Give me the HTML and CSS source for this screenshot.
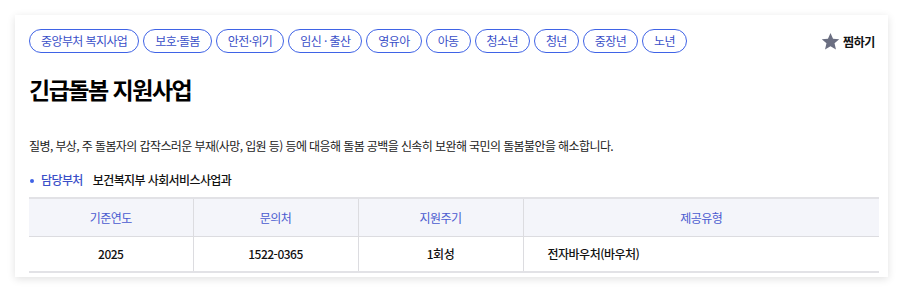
FILE: index.html
```html
<!DOCTYPE html>
<html lang="ko">
<head>
<meta charset="utf-8">
<link rel="stylesheet" href="styles.css">
</head>
<body>
<div class="card">
  <div class="top">
    <ul class="tags">
      <li class="tag">중앙부처 복지사업</li>
      <li class="tag">보호·돌봄</li>
      <li class="tag">안전·위기</li>
      <li class="tag">임신 · 출산</li>
      <li class="tag">영유아</li>
      <li class="tag">아동</li>
      <li class="tag">청소년</li>
      <li class="tag">청년</li>
      <li class="tag">중장년</li>
      <li class="tag">노년</li>
    </ul>
    <button class="fav">
      <svg class="star" width="19" height="19" viewBox="0 0 24 24"><path d="M12 1.2l3.2 7.2 7.8.7-5.9 5.2 1.8 7.7L12 18l-6.9 4 1.8-7.7-5.9-5.2 7.8-.7z" fill="#6b6f82"/></svg>
      <span>찜하기</span>
    </button>
  </div>
  <h1 class="title">긴급돌봄 지원사업</h1>
  <p class="desc">질병, 부상, 주 돌봄자의 갑작스러운 부재(사망, 입원 등) 등에 대응해 돌봄 공백을 신속히 보완해 국민의 돌봄불안을 해소합니다.</p>
  <div class="dept"><span class="dept-label">담당부처</span><span class="dept-name">보건복지부 사회서비스사업과</span></div>
  <table class="info">
    <thead>
      <tr><th class="c1">기준연도</th><th class="c2">문의처</th><th class="c3">지원주기</th><th class="c4">제공유형</th></tr>
    </thead>
    <tbody>
      <tr><td>2025</td><td>1522-0365</td><td>1회성</td><td class="left">전자바우처(바우처)</td></tr>
    </tbody>
  </table>
</div>
</body>
</html>
```
FILE: styles.css
```css
* { box-sizing: border-box; }
html, body { margin: 0; background: #fff; }
body {
  padding: 15px 15px 16px 15px;
  font-family: "Noto Sans CJK KR", "Noto Sans", sans-serif;
  color: #222;
}
.card {
  background: #fff;
  padding: 14px 9px 5px 14px;
  box-shadow: 0 2px 8px rgba(0,0,0,0.12);
  height: 262px;
}
.top {
  display: flex;
  justify-content: space-between;
  align-items: center;
  height: 24px;
}
.tags {
  list-style: none;
  margin: 0;
  padding: 0;
  display: flex;
  gap: 4px;
}
.tag {
  height: 24px;
  line-height: 22px;
  padding: 0 11px;
  border: 1px solid #3f63e6;
  border-radius: 12px;
  color: #3a4fc8;
  font-size: 12px;
  letter-spacing: -0.6px;
  white-space: nowrap;
}
.fav {
  display: flex;
  align-items: center;
  gap: 3px;
  border: 0;
  background: none;
  padding: 0 4px 0 0;
  font-family: inherit;
  font-size: 12px;
  font-weight: 700;
  color: #111;
  letter-spacing: -0.4px;
}
.star { display: block; }
.title {
  margin: 20px 0 0 0;
  font-size: 23px;
  line-height: 32px;
  font-weight: 700;
  letter-spacing: -1.5px;
  color: #000;
}
.desc {
  margin: 32px 0 0 0;
  font-size: 12px;
  line-height: 18px;
  letter-spacing: -0.6px;
  color: #222;
}
.dept {
  margin-top: 16px;
  font-size: 12px;
  line-height: 18px;
  letter-spacing: -0.6px;
  display: flex;
  align-items: center;
}
.dept-label {
  color: #3a4fc8;
  font-weight: 500;
  padding-left: 12px;
  position: relative;
  margin-right: 10px;
}
.dept-label::before {
  content: "";
  position: absolute;
  left: 1px;
  top: 8px;
  width: 4px;
  height: 4px;
  border-radius: 50%;
  background: #3f63e6;
}
.dept-name { font-weight: 500; color: #111; }
.info {
  margin-top: 8px;
  width: 100%;
  border-collapse: collapse;
  table-layout: fixed;
  font-size: 12px;
  letter-spacing: -0.5px;
}
.info th, .info td {
  border-top: 2px solid #e2e2e6;
  border-bottom: 1px solid #dcdce0;
  border-left: 1px solid #dcdce0;
  text-align: center;
}
.info th:first-child, .info td:first-child { border-left: 0; }
.info th {
  background: #f4f5fa;
  color: #4a5bd0;
  font-weight: 400;
  height: 38px;
}
.info td {
  height: 36px;
  color: #111;
  font-weight: 500;
  border-top: 0;
  border-bottom: 2px solid #e2e2e6;
}
.info td.left { text-align: left; padding-left: 24px; }
.c1 { width: 164px; }
.c2 { width: 165px; }
.c3 { width: 165px; }
```
